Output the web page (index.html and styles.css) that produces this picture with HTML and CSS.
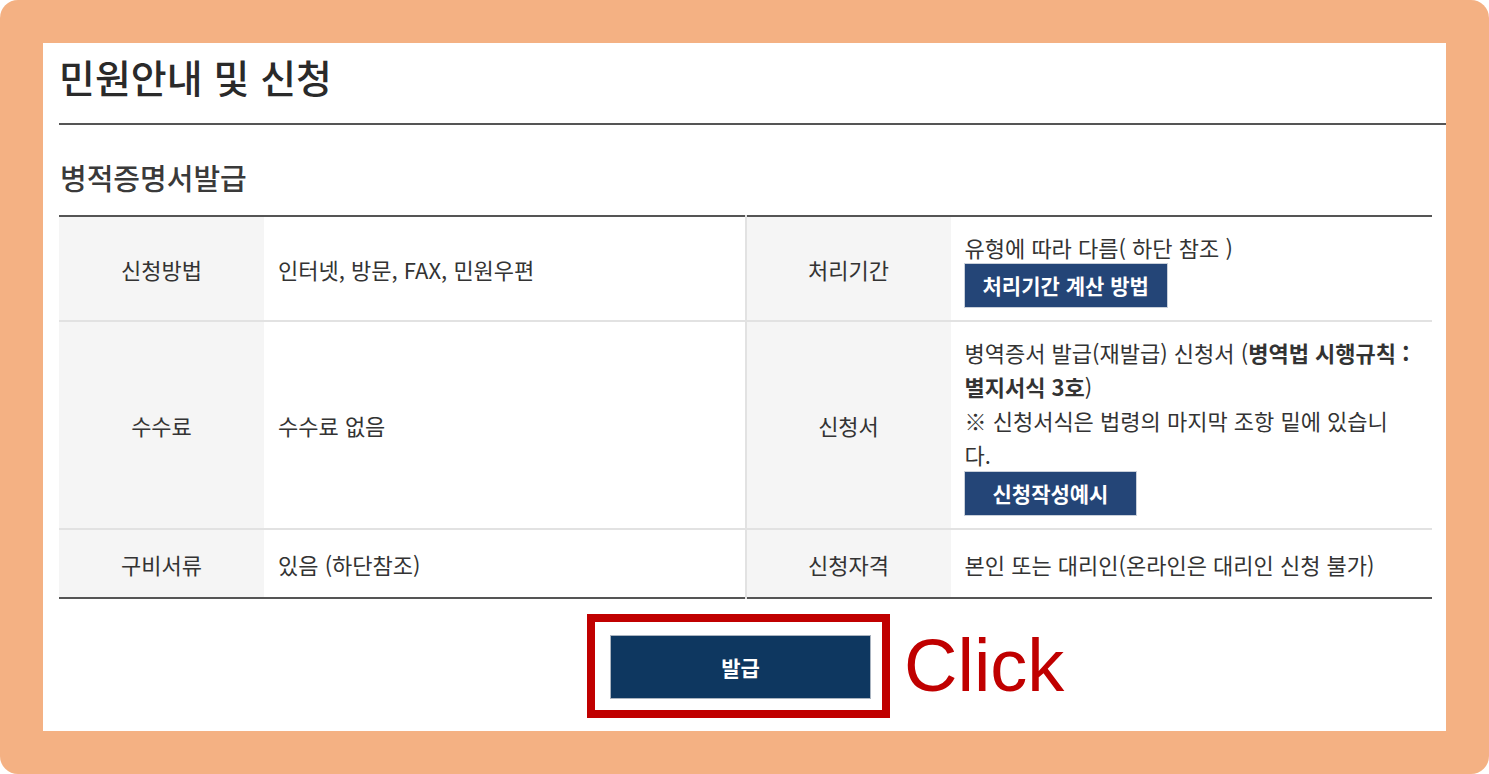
FILE: index.html
```html
<!DOCTYPE html>
<html lang="ko">
<head>
    <meta charset="UTF-8">
    <meta name="viewport" content="width=device-width, initial-scale=1.0">
    <title>민원안내 및 신청</title>
    <link rel="stylesheet" href="styles.css">
</head>
<body>

    <div class="frame">
        <div class="panel">
            <h1 class="page-title">민원안내 및 신청</h1>

            <div class="content">
                <h2 class="section-title">병적증명서발급</h2>

                <table class="info-table">
                    <colgroup>
                        <col class="col-head">
                        <col class="col-body">
                        <col class="col-head">
                        <col class="col-body">
                    </colgroup>
                    <tr>
                        <th>신청방법</th>
                        <td class="divided">인터넷, 방문, FAX, 민원우편</td>
                        <th>처리기간</th>
                        <td>
                            <p>유형에 따라 다름( 하단 참조 )</p>
                            <a class="btn-small" href="#">처리기간 계산 방법</a>
                        </td>
                    </tr>
                    <tr>
                        <th>수수료</th>
                        <td class="divided">수수료 없음</td>
                        <th>신청서</th>
                        <td>
                            <p>병역증서 발급(재발급) 신청서 (<strong>병역법 시행규칙 :<br>별지서식 3호</strong>)<br>※ 신청서식은 법령의 마지막 조항 밑에 있습니<br>다.</p>
                            <a class="btn-small btn-wide" href="#">신청작성예시</a>
                        </td>
                    </tr>
                    <tr class="short">
                        <th>구비서류</th>
                        <td class="divided">있음 (하단참조)</td>
                        <th>신청자격</th>
                        <td>본인 또는 대리인(온라인은 대리인 신청 불가)</td>
                    </tr>
                </table>

                <div class="actions">
                    <div class="highlight">
                        <button class="btn-issue">발급</button>
                    </div>
                    <span class="click-label">Click</span>
                </div>
            </div>
        </div>
    </div>

</body>
</html>
```

FILE: styles.css
```css
body {
    font-family: 'Noto Sans CJK KR', 'Noto Sans', sans-serif;
    background-color: #fff;
    color: #333;
    margin: 0;
    padding: 0;
}
.frame {
    width: 1489px;
    height: 774px;
    box-sizing: border-box;
    padding: 43px;
    background-color: #f4b183;
    border-radius: 18px;
}
.panel {
    height: 100%;
    background-color: #fff;
    padding-left: 16px;
    overflow: hidden;
}
.page-title {
    margin: 13px 0 0;
    padding-bottom: 26px;
    font-size: 39px;
    line-height: 41px;
    font-weight: 500;
    color: #2a2a2a;
    border-bottom: 2px solid #555;
}
.content {
    padding-right: 14px;
}
.section-title {
    margin: 37px 0 23px 1px;
    font-size: 29px;
    line-height: 30px;
    font-weight: 500;
    color: #3a3a3a;
}
.info-table {
    width: 100%;
    border-collapse: collapse;
    table-layout: fixed;
    border-top: 2px solid #555;
    border-bottom: 2px solid #555;
    font-size: 22px;
    line-height: 34px;
}
.col-head {
    width: 205px;
}
.info-table tr {
    border-bottom: 2px solid #e2e2e2;
}
.info-table tr:last-child {
    border-bottom: none;
}
.info-table th {
    background-color: #f5f5f5;
    font-weight: normal;
    text-align: center;
    padding: 13px 15px;
    color: #333;
}
.info-table td {
    padding: 13px 12px 13px 14px;
    vertical-align: middle;
    color: #333;
}
.info-table td.divided {
    border-right: 2px solid #e2e2e2;
}
.info-table tr.short th,
.info-table tr.short td {
    padding-top: 17px;
    padding-bottom: 16px;
}
.info-table p {
    margin: 0;
}
.info-table strong {
    font-weight: bold;
}
.btn-small {
    display: block;
    width: fit-content;
    height: 43px;
    line-height: 43px;
    padding: 0 18px;
    background-color: #244577;
    color: #fff;
    font-size: 21px;
    font-weight: bold;
    text-decoration: none;
    box-shadow: 0 0 0 1px #c9d0da;
}
.btn-wide {
    padding: 0 28px;
    margin-top: 1px;
}
.actions {
    display: flex;
    align-items: center;
    gap: 14px;
    margin: 15px 0 0 528px;
}
.highlight {
    border: 8px solid #c00000;
    padding: 13px 11px 11px 15px;
}
.btn-issue {
    display: block;
    width: 261px;
    height: 64px;
    background-color: #0e3760;
    border: 1px solid #aab4c0;
    color: #fff;
    font-family: 'Noto Sans CJK KR', sans-serif;
    font-size: 21px;
    font-weight: bold;
    cursor: pointer;
}
.click-label {
    font-family: 'Liberation Sans', Arial, sans-serif;
    font-size: 74px;
    line-height: 1;
    color: #c00000;
    margin-top: 0;
}
```
